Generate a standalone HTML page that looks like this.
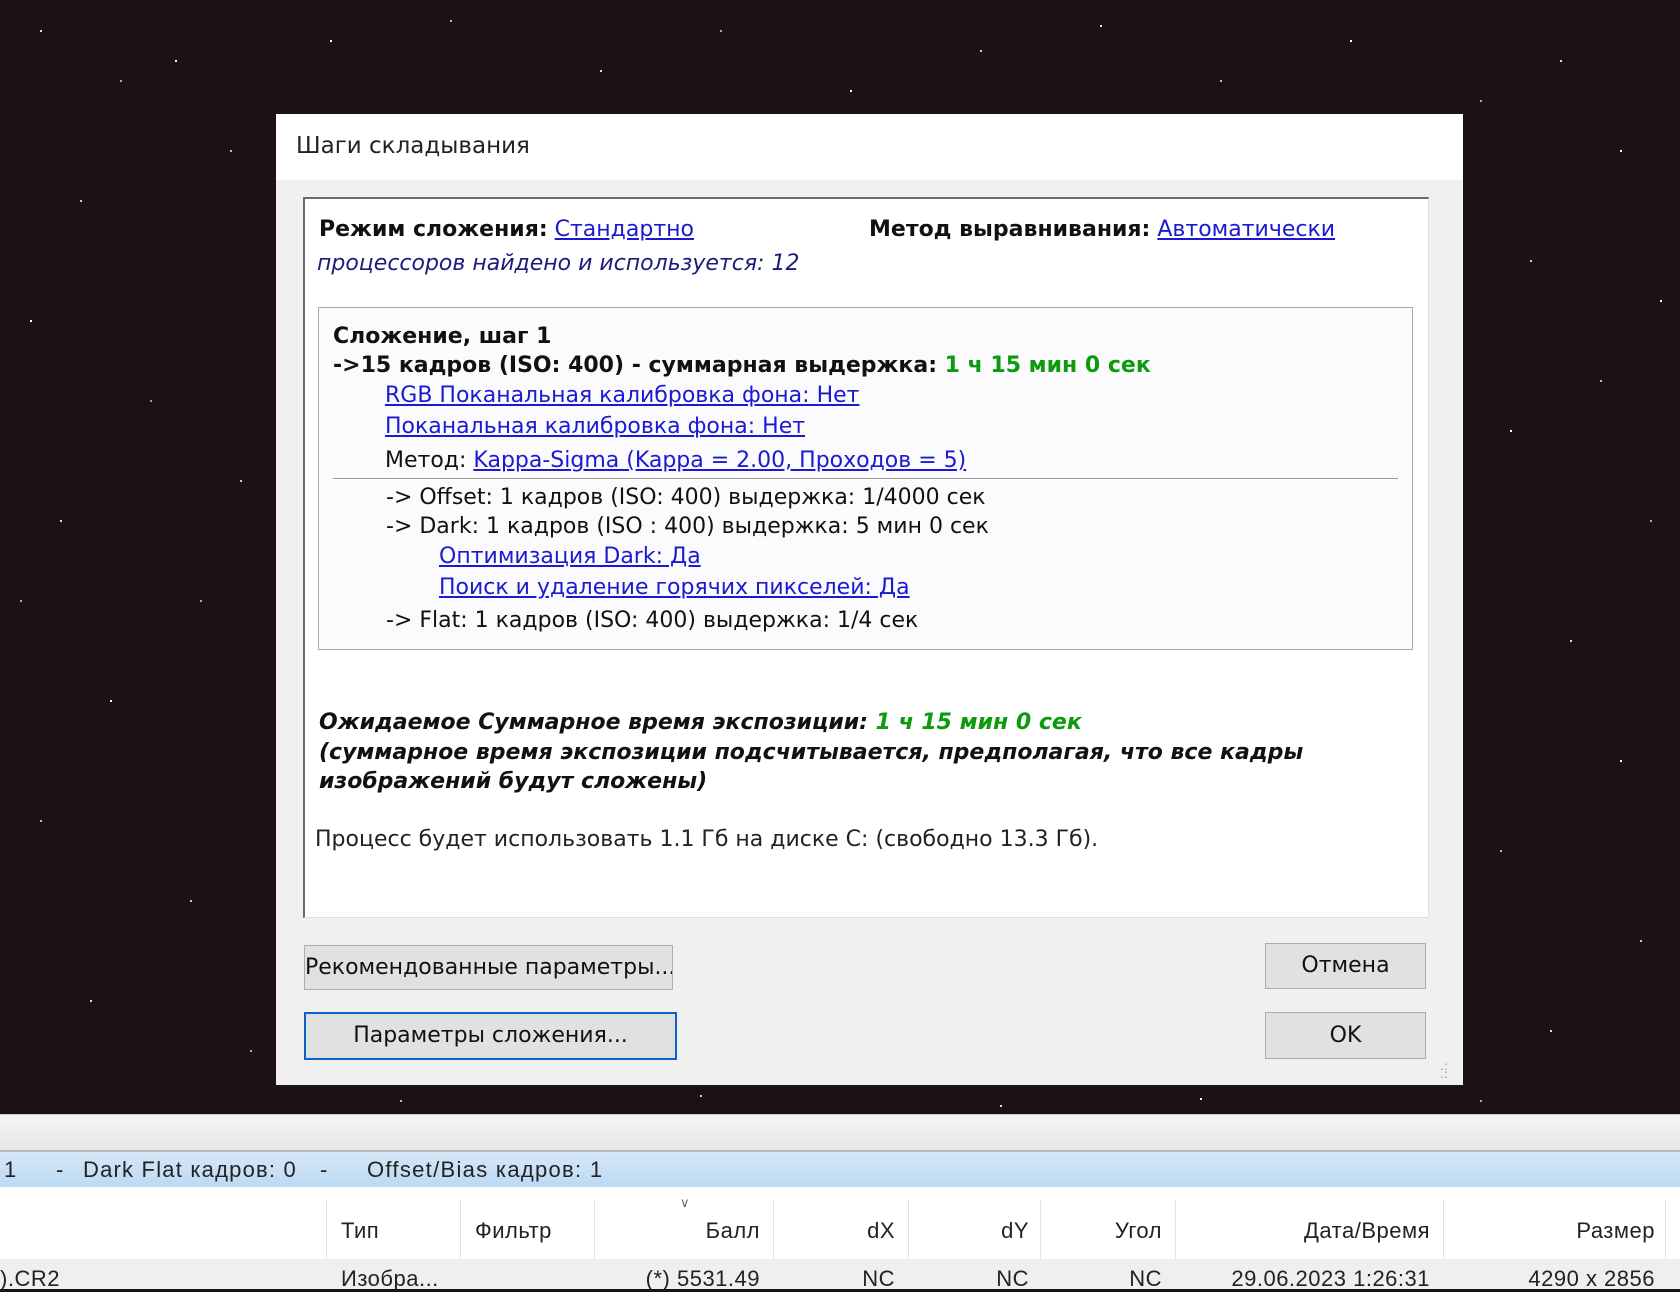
<!DOCTYPE html>
<html><head><meta charset="utf-8"><style>
*{margin:0;padding:0;box-sizing:border-box}
body{width:1680px;height:1289px;overflow:hidden;position:relative;background:#1c1113;font-family:"DejaVu Sans","Liberation Sans",sans-serif;color:#111}
.a{position:absolute;white-space:nowrap}
.stars{position:absolute;left:0;top:0;width:2px;height:2px;background:transparent;box-shadow:40px 30px #ddd,120px 80px #aaa,175px 60px #fff,230px 150px #bbb,80px 200px #ccc,30px 320px #fff,150px 400px #999,60px 520px #ddd,200px 600px #aaa,110px 700px #fff,40px 820px #bbb,190px 900px #ccc,90px 1000px #ddd,250px 1050px #aaa,330px 40px #fff,450px 20px #bbb,600px 70px #ddd,720px 30px #aaa,850px 90px #fff,980px 50px #ccc,1100px 25px #ddd,1220px 80px #bbb,1350px 40px #fff,1480px 100px #aaa,1560px 60px #ddd,1620px 150px #fff,1530px 260px #ccc,1600px 380px #bbb,1510px 430px #fff,1650px 520px #aaa,1570px 640px #ddd,1620px 760px #fff,1500px 850px #bbb,1640px 940px #ccc,1550px 1030px #ddd,1480px 1100px #aaa,400px 1100px #bbb,700px 1095px #ccc,1000px 1105px #ddd,1200px 1098px #fff,20px 600px #aaa,240px 480px #ccc,1660px 300px #fff}
.dlg{position:absolute;left:276px;top:114px;width:1187px;height:971px;background:#f0f0f0}
.tb{position:absolute;left:0;top:0;width:100%;height:66px;background:#fff}
.panel{position:absolute;left:303px;top:197px;width:1126px;height:721px;background:#fff;border-top:2px solid #6a6a6a;border-left:2px solid #6a6a6a;border-right:1px solid #e0e0e0;border-bottom:1px solid #e0e0e0}
.box{position:absolute;left:318px;top:307px;width:1095px;height:343px;background:#fbfbfd;border:1px solid #a8a8a8}
.f{font-size:22px;line-height:26px}
.b{font-weight:bold}
.lk{color:#1a1ad0;text-decoration:underline}
.g{color:#0d9a0d}
.btn{position:absolute;background:#e1e1e1;border:1px solid #adadad;font-size:22px;text-align:center;color:#111}
.hdr{position:absolute;top:1200px;height:59px;border-right:1px solid #e3e3e3}
.h{font-family:"Liberation Sans",sans-serif;font-size:22px;color:#222;position:absolute;white-space:nowrap;letter-spacing:0.5px}
</style></head><body>
<div class="stars"></div>
<div class="dlg"><div class="tb"></div></div>
<div class="a" style="left:296px;top:133px;font-size:23px;color:#222">Шаги складывания</div>
<div class="panel"></div>
<div class="a f" style="left:319px;top:217px"><span class="b">Режим сложения:</span> <span class="lk">Стандартно</span></div>
<div class="a f" style="left:869px;top:217px"><span class="b">Метод выравнивания:</span> <span class="lk">Автоматически</span></div>
<div class="a f" style="left:317px;top:251px;font-style:italic;color:#1c1c7a">процессоров найдено и используется: 12</div>
<div class="box"></div>
<div class="a f b" style="left:333px;top:324px">Сложение, шаг 1</div>
<div class="a f b" style="left:333px;top:353px">-&gt;15 кадров (ISO: 400) - суммарная выдержка: <span class="g">1 ч 15 мин 0 сек</span></div>
<div class="a f lk" style="left:385px;top:383px">RGB Поканальная калибровка фона: Нет</div>
<div class="a f lk" style="left:385px;top:414px">Поканальная калибровка фона: Нет</div>
<div class="a f" style="left:385px;top:448px">Метод: <span class="lk">Kappa-Sigma (Kappa = 2.00, Проходов = 5)</span></div>
<div class="a" style="left:333px;top:478px;width:1065px;height:1px;background:#9a9a9a"></div>
<div class="a f" style="left:386px;top:485px">-&gt; Offset: 1 кадров (ISO: 400) выдержка: 1/4000 сек</div>
<div class="a f" style="left:386px;top:514px">-&gt; Dark: 1 кадров (ISO : 400) выдержка: 5 мин 0 сек</div>
<div class="a f lk" style="left:439px;top:544px">Оптимизация Dark: Да</div>
<div class="a f lk" style="left:439px;top:575px">Поиск и удаление горячих пикселей: Да</div>
<div class="a f" style="left:386px;top:608px">-&gt; Flat: 1 кадров (ISO: 400) выдержка: 1/4 сек</div>
<div class="a f b" style="left:319px;top:710px;font-style:italic">Ожидаемое Суммарное время экспозиции: <span class="g">1 ч 15 мин 0 сек</span></div>
<div class="a f b" style="left:319px;top:740px;font-style:italic">(суммарное время экспозиции подсчитывается, предполагая, что все кадры</div>
<div class="a f b" style="left:319px;top:769px;font-style:italic">изображений будут сложены)</div>
<div class="a f" style="left:315px;top:827px;color:#222">Процесс будет использовать 1.1 Гб на диске C: (свободно 13.3 Гб).</div>
<div class="btn" style="left:304px;top:945px;width:369px;height:45px;line-height:43px;overflow:hidden;text-align:right;padding-right:4px"><span style="white-space:nowrap">Рекомендованные параметры...</span></div>
<div class="btn" style="left:304px;top:1012px;width:373px;height:48px;line-height:44px;border:2px solid #0a64c8">Параметры сложения...</div>
<div class="btn" style="left:1265px;top:943px;width:161px;height:46px;line-height:44px">Отмена</div>
<div class="btn" style="left:1265px;top:1012px;width:161px;height:47px;line-height:45px">OK</div>
<div class="a" style="left:1440px;top:1062px;font-size:12px;color:#999;line-height:8px">.:<br>.:</div>
<div class="a" style="left:0;top:1114px;width:1680px;height:38px;background:linear-gradient(#f4f4f4,#e6e6e6);border-top:1px solid #cfcfcf"></div>
<div class="a" style="left:0;top:1150px;width:1680px;height:2px;background:#b8b8b8"></div>
<div class="a" style="left:0;top:1152px;width:1680px;height:35px;background:linear-gradient(#d6e8f8,#bcd9f3)"></div>
<div class="h" style="left:4px;top:1157px">1</div>
<div class="h" style="left:56px;top:1157px">-</div>
<div class="h" style="left:83px;top:1157px;letter-spacing:1.2px">Dark Flat кадров: 0</div>
<div class="h" style="left:320px;top:1157px">-</div>
<div class="h" style="left:367px;top:1157px;letter-spacing:1.3px">Offset/Bias кадров: 1</div>
<div class="a" style="left:0;top:1187px;width:1680px;height:72px;background:#fff"></div>
<div class="hdr" style="left:0;width:327px"></div>
<div class="hdr" style="left:327px;width:134px"></div>
<div class="hdr" style="left:461px;width:134px"></div>
<div class="hdr" style="left:595px;width:179px"></div>
<div class="hdr" style="left:774px;width:135px"></div>
<div class="hdr" style="left:909px;width:132px"></div>
<div class="hdr" style="left:1041px;width:135px"></div>
<div class="hdr" style="left:1176px;width:268px"></div>
<div class="hdr" style="left:1444px;width:222px"></div>
<div class="a" style="left:680px;top:1196px;font-size:13px;color:#666">∨</div>
<div class="h" style="left:341px;top:1218px">Тип</div>
<div class="h" style="left:475px;top:1218px">Фильтр</div>
<div class="h" style="right:920px;top:1218px">Балл</div>
<div class="h" style="right:785px;top:1218px">dX</div>
<div class="h" style="right:651px;top:1218px">dY</div>
<div class="h" style="right:518px;top:1218px">Угол</div>
<div class="h" style="right:250px;top:1218px">Дата/Время</div>
<div class="h" style="right:25px;top:1218px">Размер</div>
<div class="a" style="left:0;top:1259px;width:1680px;height:30px;background:#efefef"></div>
<div class="h" style="left:0;top:1266px">).CR2</div>
<div class="h" style="left:341px;top:1266px">Изобра...</div>
<div class="h" style="right:920px;top:1266px">(*) 5531.49</div>
<div class="h" style="right:785px;top:1266px">NC</div>
<div class="h" style="right:651px;top:1266px">NC</div>
<div class="h" style="right:518px;top:1266px">NC</div>
<div class="h" style="right:250px;top:1266px">29.06.2023 1:26:31</div>
<div class="h" style="right:25px;top:1266px">4290 x 2856</div>
</body></html>
